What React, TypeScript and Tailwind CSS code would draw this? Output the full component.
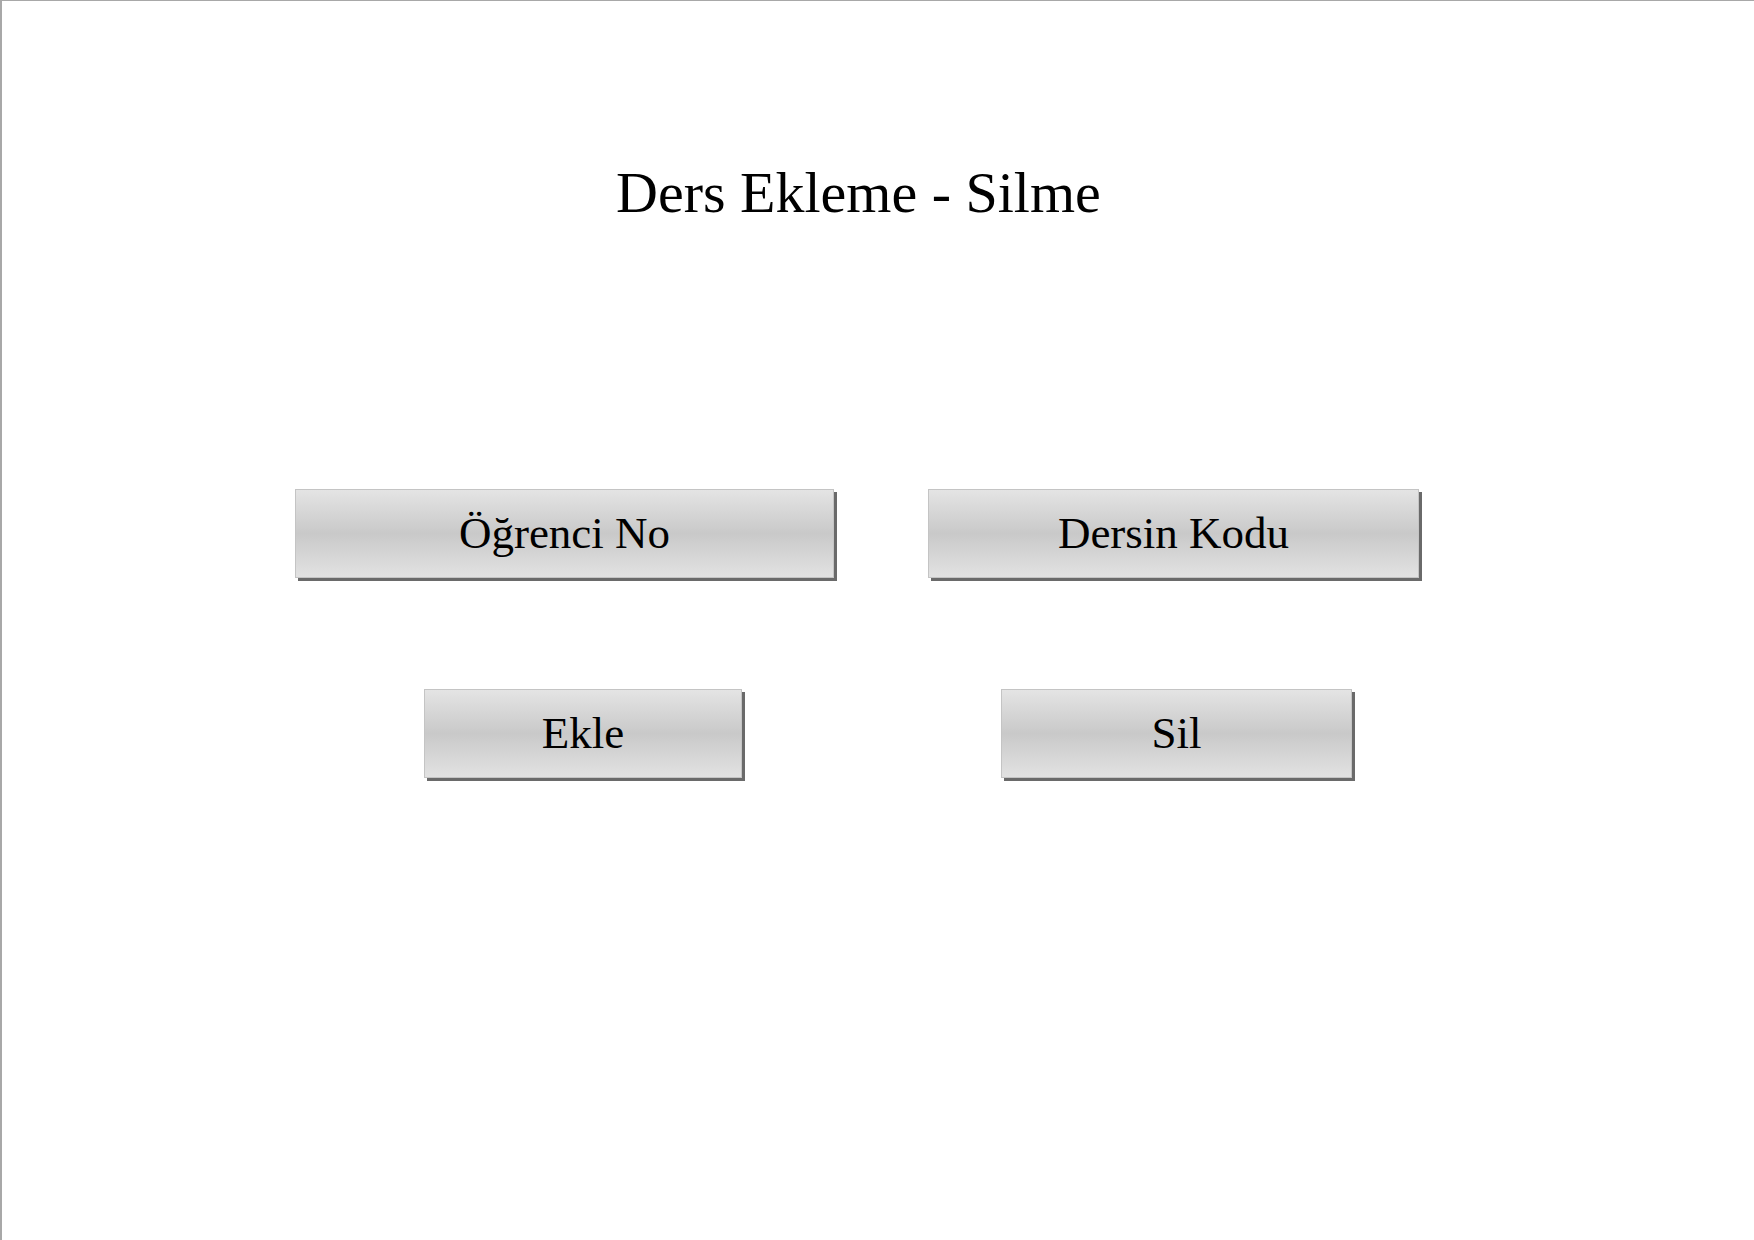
import React from "react";

type ButtonProps = {
  label: string;
  width: string;
};

function GrayButton({ label, width }: ButtonProps) {
  return (
    <button
      className={`${width} h-[89px] flex items-center justify-center border border-[#c4c4c4] bg-gradient-to-b from-[#e4e4e4] via-[#c9c9c9] to-[#e2e2e2] shadow-[3px_3px_0_0_#6a6a6a] text-black text-[45px] leading-none`}
      style={{ fontFamily: '"Liberation Serif", "Times New Roman", serif' }}
    >
      {label}
    </button>
  );
}

function App() {
  return (
    <div
      className="w-[1754px] h-[1240px] bg-white border-t border-l-2 border-[#a8a8a8] overflow-hidden"
      style={{ fontFamily: '"Liberation Serif", "Times New Roman", serif' }}
    >
      <h1 className="ml-[614px] mt-[163px] text-[58px] leading-none text-black">
        Ders Ekleme - Silme
      </h1>

      <div className="mt-[267px] ml-[293px] flex gap-[94px]">
        <GrayButton label="Öğrenci No" width="w-[539px]" />
        <GrayButton label="Dersin Kodu" width="w-[491px]" />
      </div>

      <div className="mt-[111px] ml-[422px] flex gap-[259px]">
        <GrayButton label="Ekle" width="w-[318px]" />
        <GrayButton label="Sil" width="w-[351px]" />
      </div>
    </div>
  );
}

export default App;
